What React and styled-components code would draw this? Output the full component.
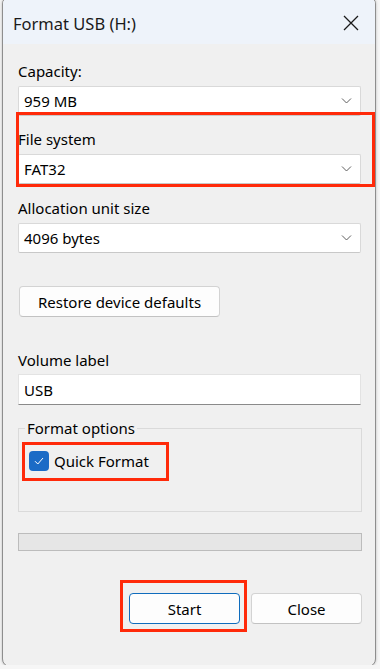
import styled, { createGlobalStyle } from 'styled-components';

const GlobalStyle = createGlobalStyle`
  html, body {
    margin: 0;
    padding: 0;
    background: #f6f6f6;
    overflow: hidden;
  }
  * {
    box-sizing: border-box;
  }
`;

const Screen = styled.div`
  width: 380px;
  height: 669px;
  padding-left: 2px;
  font-family: 'Noto Sans', 'Open Sans', sans-serif;
  color: #000;
`;

const Window = styled.div`
  width: 374px;
  height: 671px;
  margin-top: -4px;
  background: #f0f0f0;
  border: 1px solid #8e8e8e;
  border-radius: 8px;
  box-shadow: 0 0 3px rgba(0, 0, 0, 0.25);
  overflow: hidden;
  display: flex;
  flex-direction: column;
`;

const TitleBar = styled.div`
  height: 47px;
  flex-shrink: 0;
  background: #eef3fa;
  display: flex;
  align-items: center;
  justify-content: space-between;
  padding: 5px 10px 0 10px;
`;

const Title = styled.span`
  font-size: 16.5px;
  color: #1a1a1a;
`;

const CloseX = styled.button`
  width: 24px;
  height: 24px;
  margin-right: 2px;
  padding: 0;
  border: none;
  background: transparent;
  display: flex;
  align-items: center;
  justify-content: center;
`;

const Body = styled.div`
  flex: 1;
  display: flex;
  flex-direction: column;
  padding: 17px 12px 0 15px;
`;

const Field = styled.div`
  display: flex;
  flex-direction: column;
  margin-top: ${(p) => p.$gap || 0}px;
`;

const Label = styled.div`
  font-size: 15px;
  line-height: 20px;
  margin-bottom: ${(p) => p.$space || 5}px;
`;

const SelectBox = styled.div`
  width: 343px;
  height: 30px;
  background: #fff;
  border: 1px solid #d9d9d9;
  border-bottom-color: #c8c8c8;
  border-radius: 2px;
  display: flex;
  align-items: center;
  justify-content: space-between;
  padding: 0 8px 0 5px;
  font-size: 15px;
`;

const TextBox = styled.div`
  width: 343px;
  height: 31px;
  background: #fff;
  border: 1px solid #e3e3e3;
  border-bottom: 1px solid #8a8a8a;
  display: flex;
  align-items: center;
  padding: 0 5px;
  font-size: 15px;
`;

const Highlight = styled.div`
  position: relative;
  align-self: ${(p) => p.$self || 'stretch'};
  &::after {
    content: '';
    position: absolute;
    top: ${(p) => p.$t}px;
    left: ${(p) => p.$l}px;
    right: ${(p) => p.$r}px;
    bottom: ${(p) => p.$b}px;
    border: 3px solid #ff2a0a;
    pointer-events: none;
  }
`;

const Button = styled.button`
  width: ${(p) => p.$w}px;
  height: 31px;
  background: #fdfdfd;
  border: 1px solid ${(p) => (p.$primary ? '#0f6cbd' : '#d3d3d3')};
  border-bottom-color: ${(p) => (p.$primary ? '#0f6cbd' : '#c2c2c2')};
  border-radius: 4px;
  font-family: inherit;
  font-size: 15px;
  color: #000;
  padding: 0;
`;

const RestoreRow = styled.div`
  margin-top: 33px;
  padding-left: 1px;
`;

const GroupBox = styled.fieldset`
  margin: 13px 0 0 0;
  width: 344px;
  height: 94px;
  border: 1px solid #dadada;
  padding: 13px 6px 0 10px;
  min-width: 0;
  display: flex;
  flex-direction: column;
  align-items: flex-start;
`;

const Legend = styled.legend`
  font-size: 15px;
  line-height: 20px;
  padding: 0 2px;
  margin-left: -4px;
`;

const CheckRow = styled.label`
  display: flex;
  align-items: center;
  gap: 5px;
  font-size: 15px;
  height: 20px;
`;

const CheckBox = styled.span`
  width: 20px;
  height: 20px;
  border-radius: 4px;
  background: #1b6bc6;
  display: flex;
  align-items: center;
  justify-content: center;
`;

const Progress = styled.div`
  margin-top: 21px;
  width: 344px;
  height: 18px;
  background: #e6e6e6;
  border: 1px solid #bcbcbc;
`;

const Footer = styled.div`
  margin-top: 42px;
  width: 344px;
  display: flex;
  justify-content: flex-end;
  gap: 11px;
`;

const Chevron = () => (
  <svg width="11" height="6" viewBox="0 0 11 6">
    <path d="M1 0.5 L5.5 5 L10 0.5" fill="none" stroke="#5f5f5f" strokeWidth="1" />
  </svg>
);

const Select = ({ value }) => (
  <SelectBox>
    <span>{value}</span>
    <Chevron />
  </SelectBox>
);

const App = () => {
  return (
    <>
      <GlobalStyle />
      <Screen>
        <Window>
          <TitleBar>
            <Title>Format USB (H:)</Title>
            <CloseX aria-label="Close">
              <svg width="16" height="16" viewBox="0 0 16 16">
                <path d="M1 1 L15 15 M15 1 L1 15" stroke="#1a1a1a" strokeWidth="1.3" />
              </svg>
            </CloseX>
          </TitleBar>
          <Body>
            <Field>
              <Label>Capacity:</Label>
              <Select value="959 MB" />
            </Field>
            <Highlight $t={-4} $l={-2} $r={-12} $b={-3}>
              <Field $gap={13}>
                <Label>File system</Label>
                <Select value="FAT32" />
              </Field>
            </Highlight>
            <Field $gap={14}>
              <Label>Allocation unit size</Label>
              <Select value="4096 bytes" />
            </Field>
            <RestoreRow>
              <Button $w={201}>Restore device defaults</Button>
            </RestoreRow>
            <Field $gap={33}>
              <Label $space={4}>Volume label</Label>
              <TextBox>USB</TextBox>
            </Field>
            <GroupBox>
              <Legend>Format options</Legend>
              <Highlight $self="flex-start" $t={-9} $l={-7} $r={-20} $b={-10}>
                <CheckRow>
                  <CheckBox>
                    <svg width="12" height="10" viewBox="0 0 12 10">
                      <path d="M2 5.2 L4.8 8 L10 2" fill="none" stroke="#fff" strokeWidth="1" />
                    </svg>
                  </CheckBox>
                  Quick Format
                </CheckRow>
              </Highlight>
            </GroupBox>
            <Progress />
            <Footer>
              <Highlight $t={-13} $l={-9} $r={-7} $b={-8}>
                <Button $w={111} $primary>Start</Button>
              </Highlight>
              <Button $w={111}>Close</Button>
            </Footer>
          </Body>
        </Window>
      </Screen>
    </>
  );
};

export default App;
